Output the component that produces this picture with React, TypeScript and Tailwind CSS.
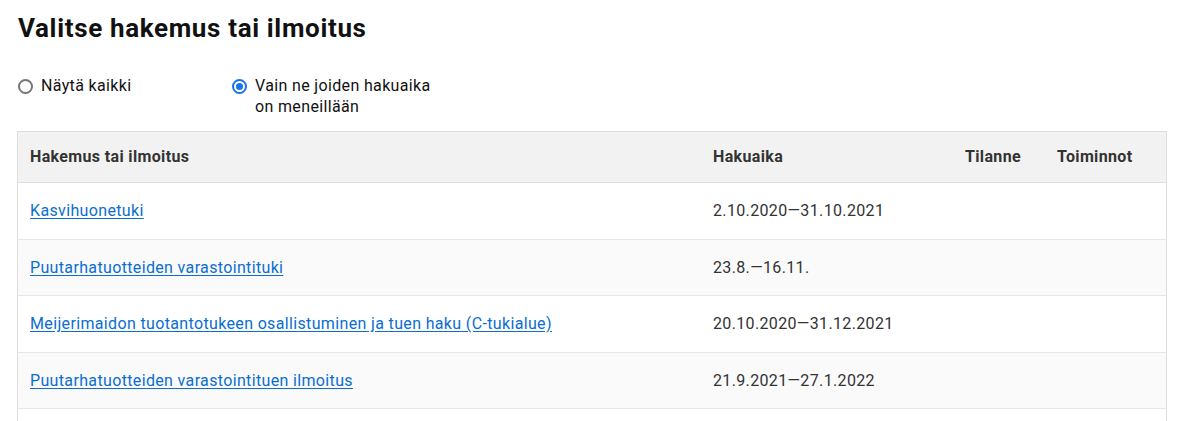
import { useState } from "react";

type Row = { name: string; period: string };

const rows: Row[] = [
  { name: "Kasvihuonetuki", period: "2.10.2020—31.10.2021" },
  { name: "Puutarhatuotteiden varastointituki", period: "23.8.—16.11." },
  { name: "Meijerimaidon tuotantotukeen osallistuminen ja tuen haku (C-tukialue)", period: "20.10.2020—31.12.2021" },
  { name: "Puutarhatuotteiden varastointituen ilmoitus", period: "21.9.2021—27.1.2022" },
];

function Radio({ checked, label, onClick }: { checked: boolean; label: string; onClick: () => void }) {
  return (
    <label className="flex items-start gap-2 w-[214px] cursor-pointer" onClick={onClick}>
      <span
        className={`mt-[4px] shrink-0 w-[15px] h-[15px] rounded-full border-2 flex items-center justify-center bg-white ${
          checked ? "border-[#1a73e8]" : "border-[#767676]"
        }`}
      >
        {checked && <span className="w-[7px] h-[7px] rounded-full bg-[#1a73e8]" />}
      </span>
      <span className="max-w-[185px] text-[16px] leading-[21px] tracking-[0.35px] text-[#111]">{label}</span>
    </label>
  );
}

export default function App() {
  const [onlyOpen, setOnlyOpen] = useState(true);
  const grid = "grid grid-cols-[683px_252px_92px_1fr]";

  return (
    <div className="min-h-screen bg-white px-[17px] pt-[12px] font-['Roboto','Liberation_Sans',sans-serif]">
      <h1 className="text-[26px] leading-8 font-bold tracking-[0.65px] text-[#111] pl-px">Valitse hakemus tai ilmoitus</h1>

      <div className="flex mt-[31px] pl-px">
        <Radio checked={!onlyOpen} label="Näytä kaikki" onClick={() => setOnlyOpen(false)} />
        <Radio checked={onlyOpen} label="Vain ne joiden hakuaika on meneillään" onClick={() => setOnlyOpen(true)} />
      </div>

      <div className="mt-[14px] border border-[#dedede] text-[16px] leading-6 tracking-[0.35px] text-[#333]">
        <div className={`${grid} bg-[#f2f2f2] font-bold py-[13px] border-b border-[#dedede]`}>
          <div className="pl-3">Hakemus tai ilmoitus</div>
          <div className="pl-3">Hakuaika</div>
          <div className="pl-3">Tilanne</div>
          <div className="pl-3">Toiminnot</div>
        </div>
        {rows.map((r, i) => (
          <div
            key={r.name}
            className={`${grid} py-4 leading-[23.5px] border-b border-[#e6e6e6] ${i % 2 ? "bg-[#fafafa]" : "bg-white"}`}
          >
            <div className="pl-3">
              <a href="#" className="text-[#0a6ed1] underline underline-offset-2">
                {r.name}
              </a>
            </div>
            <div className="pl-3">{r.period}</div>
            <div className="pl-3" />
            <div className="pl-3" />
          </div>
        ))}
        <div className="h-14 bg-white" />
      </div>
    </div>
  );
}
